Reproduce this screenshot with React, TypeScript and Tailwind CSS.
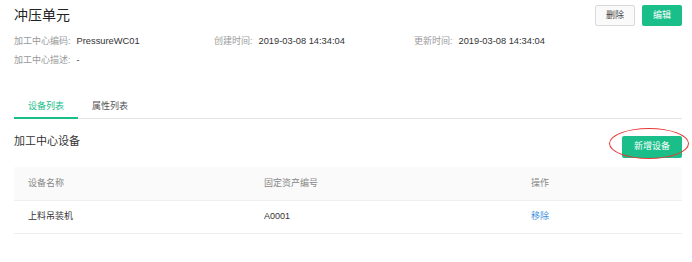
import React from "react";

const infoItems = [
  { label: "加工中心编码:", value: "PressureWC01" },
  { label: "创建时间:", value: "2019-03-08 14:34:04" },
  { label: "更新时间:", value: "2019-03-08 14:34:04" },
];

const rows = [{ name: "上料吊装机", code: "A0001" }];

export default function App() {
  return (
    <div
      className="w-[692px] h-[262px] bg-white pl-[14px] pr-[10px] pt-[5px] text-[#333]"
      style={{ fontFamily: '"Liberation Sans", "Noto Sans CJK SC", sans-serif' }}
    >
      {/* header */}
      <div className="flex justify-between items-start h-[21px]">
        <h1 className="text-[14px] leading-[21px] text-[#222]">冲压单元</h1>
        <div className="flex gap-[7px]">
          <button className="w-[40px] h-[21px] rounded-[2px] border border-[#d9d9d9] bg-[#fafafa] text-[9px] text-[#444]">
            删除
          </button>
          <button className="w-[40px] h-[21px] rounded-[2px] bg-[#19be88] text-[9px] text-white">
            编辑
          </button>
        </div>
      </div>

      {/* info */}
      <div className="mt-[6px] text-[9px]">
        <div className="grid grid-cols-[200px_200px_1fr] h-[19px] leading-[19px]">
          {infoItems.map((item) => (
            <div key={item.label} className="flex">
              <span className="text-[#999]">{item.label}</span>
              <span className="ml-[6px] text-[9.3px] text-[#333]">{item.value}</span>
            </div>
          ))}
        </div>
        <div className="flex h-[19px] leading-[19px]">
          <span className="text-[#999]">加工中心描述:</span>
          <span className="ml-[6px] text-[#333]">-</span>
        </div>
      </div>

      {/* tabs */}
      <div className="mt-[25px] flex border-b border-[#e4e4e4] h-[24px]">
        <div className="w-[64px] text-center text-[9px] leading-[22px] text-[#19be88] border-b-2 border-[#19be88] -mb-px">
          设备列表
        </div>
        <div className="w-[64px] text-center text-[9px] leading-[22px] text-[#555]">
          属性列表
        </div>
      </div>

      {/* section */}
      <div className="mt-[13px] flex justify-between items-start h-[22px]">
        <h2 className="text-[11px] leading-[18px] text-[#333]">加工中心设备</h2>
        <div className="relative">
          <button className="w-[60px] h-[22px] rounded-[2px] bg-[#19be88] text-[9px] text-white">
            新增设备
          </button>
          <div className="absolute left-[-13px] top-[-4px] w-[80px] h-[31px] rounded-[50%] border border-[#e53935] pointer-events-none" />
        </div>
      </div>

      {/* table */}
      <div className="mt-[13px] text-[9px]">
        <div className="grid grid-cols-[236px_267px_1fr] h-[34px] items-center bg-[#fafafa] border-b border-[#eeeeee] pl-[14px] text-[#888]">
          <span>设备名称</span>
          <span>固定资产编号</span>
          <span>操作</span>
        </div>
        {rows.map((row) => (
          <div
            key={row.code}
            className="grid grid-cols-[236px_267px_1fr] h-[33px] items-center border-b border-[#eeeeee] pl-[14px] text-[#333]"
          >
            <span>{row.name}</span>
            <span>{row.code}</span>
            <span className="text-[#3b8fe0]">移除</span>
          </div>
        ))}
      </div>
    </div>
  );
}
